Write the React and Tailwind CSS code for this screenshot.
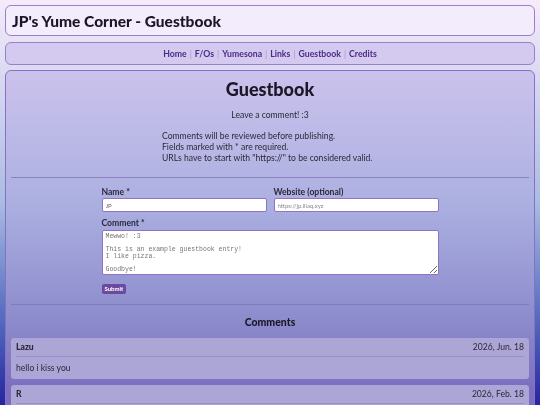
const navLinks = ['Home', 'F/Os', 'Yumesona', 'Links', 'Guestbook', 'Credits'];

const comments = [
    { id: 1, name: 'Lazu', date: '2026, Jun. 18', text: 'hello i kiss you' },
    { id: 2, name: 'R', date: '2026, Feb. 18', text: 'hi!!' },
];

export default function App() {
    return (
        <div
            className="h-[405px] overflow-hidden bg-gradient-to-b from-[#f6ebfb] via-[#a9bce2] to-[#2723a0] px-[5px] pt-[5px] text-[#2b2838]"
            style={{ fontFamily: 'Lato, "Open Sans", sans-serif' }}
        >
            {/* Site header */}
            <header className="flex h-[31px] items-center rounded-[6px] border border-[#9a80c6] bg-[#f3ecfd] px-[6px]">
                <h1 className="text-[15.5px] font-black leading-[20px] text-[#1c1726]">JP's Yume Corner - Guestbook</h1>
            </header>

            {/* Nav */}
            <nav className="mt-[6px] flex h-[23px] items-center justify-center rounded-[6px] border border-[#9a80c6] bg-[#d4c9ee] text-[8.7px] font-bold text-[#4a2b86]">
                {navLinks.map((link, i) => (
                    <span key={link} className="flex items-center">
                        {i > 0 && <span className="mx-[3px] font-normal text-[#a898cc]">|</span>}
                        <a className="cursor-pointer">{link}</a>
                    </span>
                ))}
            </nav>

            {/* Main content */}
            <main className="mt-[5px] h-[420px] rounded-[6px] border border-[#8a70c0] bg-[linear-gradient(to_bottom,#cbc2ec_0px,#acb0e1_130px,#8c8bcc_250px,#7b6dbf_320px,#7566bc_420px)] px-[5px]">
                <h2 className="mt-[7px] text-center text-[18px] font-black leading-[22px] text-[#1c1726]">Guestbook</h2>
                <p className="mt-[10px] text-center text-[8.6px] leading-[11px]">Leave a comment! :3</p>
                <div className="mt-[10px] pl-[151px] text-[8.6px] leading-[11px]">
                    <p>Comments will be reviewed before publishing.</p>
                    <p>Fields marked with * are required.</p>
                    <p>URLs have to start with "https://" to be considered valid.</p>
                </div>

                <hr className="mt-[13px] border-t border-[#8c82c2]" />

                {/* Form */}
                <form className="mx-auto mt-[8px] w-[337px]">
                    <div className="grid grid-cols-2 gap-x-[7px]">
                        <div>
                            <label className="block text-[8.6px] font-bold leading-[12px]">Name *</label>
                            <input
                                defaultValue="JP"
                                className="block h-[14px] w-full rounded-[2px] border border-[#8e74c2] bg-white px-[3px] text-[6px] text-[#666]"
                            />
                        </div>
                        <div>
                            <label className="block text-[8.6px] font-bold leading-[12px]">Website (optional)</label>
                            <input
                                placeholder="https://jp.lliaq.xyz"
                                className="block h-[14px] w-full rounded-[2px] border border-[#8e74c2] bg-white px-[3px] text-[6px] text-[#666] placeholder:text-[#888]"
                            />
                        </div>
                    </div>
                    <label className="mt-[5px] block text-[8.6px] font-bold leading-[12px]">Comment *</label>
                    <textarea
                        defaultValue={'Mewwo! :3\n\nThis is an example guestbook entry!\nI like pizza.\n\nGoodbye!'}
                        className="mt-[1px] block h-[45px] w-full resize-y rounded-[2px] border border-[#8e74c2] bg-white px-[3px] py-[3px] text-[6.5px] leading-[6.5px] text-[#777]"
                        style={{ fontFamily: '"Liberation Mono", monospace' }}
                    />
                    <button
                        type="button"
                        className="mt-[9px] block h-[10px] rounded-[2px] bg-[#6a4a9e] px-[3px] text-[6px] font-bold leading-[10px] text-white"
                    >
                        Submit
                    </button>
                </form>

                <hr className="mt-[10px] border-t border-[#7f78ba]" />

                <h3 className="mt-[10px] text-center text-[10.5px] font-black leading-[14px] text-[#1c1726]">Comments</h3>

                {/* Comment list */}
                <div className="mt-[9px] flex flex-col gap-[6px]">
                    {comments.map((c) => (
                        <div key={c.id} className="rounded-[3px] bg-[#aca6d6] px-[5px]">
                            <div className="flex h-[19px] items-center justify-between border-b border-[#968fc6] text-[8.6px]">
                                <span className="font-black">{c.name}</span>
                                <span>{c.date}</span>
                            </div>
                            <p className="flex h-[22px] items-center text-[8.6px]">{c.text}</p>
                        </div>
                    ))}
                </div>
            </main>
        </div>
    );
}
